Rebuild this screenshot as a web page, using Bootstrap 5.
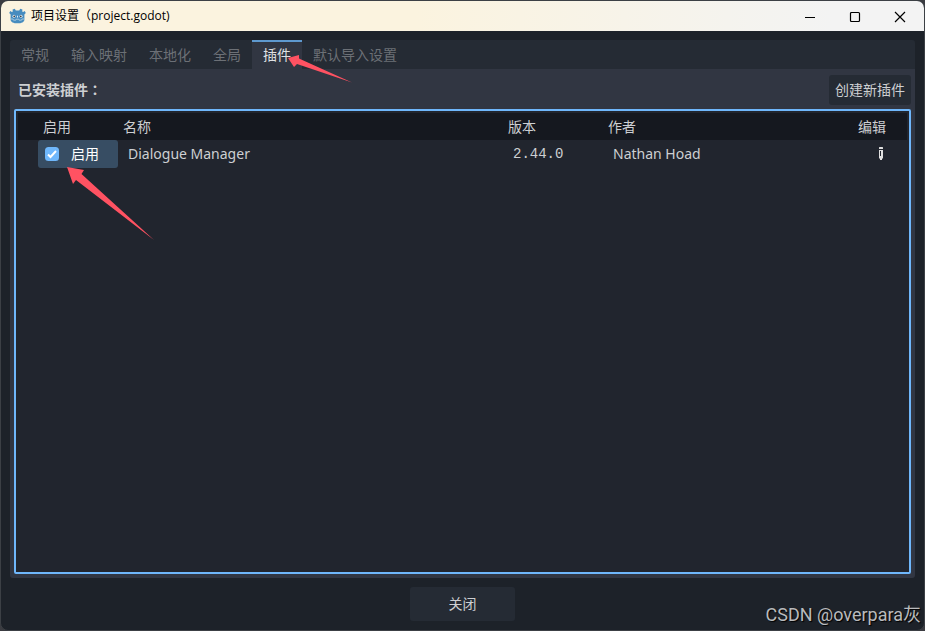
<!DOCTYPE html>
<html lang="zh-CN">
<head>
<meta charset="utf-8">
<meta name="viewport" content="width=device-width, initial-scale=1">
<title>项目设置（project.godot)</title>
<link href="https://cdn.jsdelivr.net/npm/bootstrap@5.3.0/dist/css/bootstrap.min.css" rel="stylesheet">
<style>
  body { background: #3b3c41; color: #cdcfd2; font-family: "Noto Sans", "Noto Sans CJK SC", sans-serif; font-size: 14px; line-height: 20px; }
  .window { background: #1d2229; border: 1px solid #3c4045; border-radius: 8px; }
  .titlebar { height: 30px; padding: 0 2px 0 8px; background: linear-gradient(90deg, #fbf3df 0%, #fbf3df 45%, #f3f3f3 90%); color: #000; font-family: "Open Sans", "Noto Sans CJK SC", sans-serif; font-size: 12px; }
  .app-logo { margin-right: 5px; }
  .win-btn { width: 45px; height: 30px; border: 0; padding: 0; background: none; color: #000; }
  .win-body { padding: 9px; }
  .tab-strip { background: #252b34; border-radius: 3px 3px 0 0; }
  .tab-strip .nav-link { color: #6c7076; padding: 3px 11px 4px; border-top: 2px solid transparent; border-radius: 0; line-height: 20px; }
  .tab-strip .nav-link.active { color: #dfe0e2; background: #313642; border-top-color: #5e99cf; }
  .panel { background: #313642; padding: 6px 4px 4px; border-radius: 0 0 3px 3px; }
  .installed { padding-left: 4px; font-size: 14px; font-weight: 700; }
  .colon { font-family: "Noto Sans CJK TC", sans-serif; }
  .btn-editor { --bs-btn-color: #cdcfd2; --bs-btn-bg: #252b34; --bs-btn-hover-color: #fff; --bs-btn-hover-bg: #2d3440; --bs-btn-border-width: 0; --bs-btn-border-radius: 3px; --bs-btn-font-size: 14px; --bs-btn-line-height: 20px; --bs-btn-padding-x: 6px; --bs-btn-padding-y: 5px; }
  .btn-close-dialog { min-width: 105px; --bs-btn-padding-y: 7px; }
  .dialog-actions { padding-top: 9px; }
  .tree { background: #21252e; border: 2px solid #6fb7fb; border-radius: 2px; padding: 2px; margin-top: 4px; }
  .tree table { table-layout: fixed; line-height: 20px; }
  .tree th { background: #15181f; font-weight: 400; padding: 4px 4px 3px 5px; }
  .tree td { padding: 4px 10px; }
  .tree .cell-on { background: #374d63; color: #fff; padding: 0 7px; border-radius: 3px; }
  .col-gutter { width: 20px; } .col-on { width: 80px; } .col-ver { width: 100px; }
  .col-author { width: 250px; } .col-edit { width: 40px; } .col-end { width: 14px; }
  .version { font-family: "Liberation Mono", monospace; }
  .tick { width: 14px; height: 14px; margin: 0 12px 0 0; border: 0; border-radius: 2px; }
  .tick:checked { background-color: #6fb7fb; background-image: none; }
  .tick-mark { left: 0; top: 3px; pointer-events: none; }
  .edit-btn { border: 0; padding: 0; background: none; width: 16px; height: 16px; }
  .pointer { pointer-events: none; fill: #ff5262; }
  .pointer-tab { left: 287px; top: 54px; }
  .pointer-row { left: 66px; top: 166px; }
  .watermark { right: 3px; bottom: 3px; font-family: "Roboto", "Noto Sans CJK SC", sans-serif; font-size: 18px; line-height: 24px; color: #b9bbbd; text-shadow: 1px 1px 1px #000; }
</style>
</head>
<body>
<div class="window vh-100 d-flex flex-column overflow-hidden position-relative">
  <header class="titlebar d-flex align-items-center flex-shrink-0">
    <svg class="app-logo" width="17" height="16" viewBox="0 0 17 16" aria-hidden="true">
      <path d="M5.800.8 6.800 2.600h3.400L11.200.8l2.200.8-.2 1.800.9.600 1.600-.9 1.100 1.900-1.400 1.400v5c0 2.500-2.800 3.900-6.900 3.900S1.600 13.900 1.600 11.400v-5L.2 5l1.100-1.900 1.600.9.900-.6-.2-1.800z" fill="#478cbf"/>
      <path d="M2 11h2l.5 1.200h2.300l.4-1h2.600l.4 1h2.300l.5-1.200h2" fill="none" stroke="#b7d3e6" stroke-width=".8"/>
      <circle cx="5" cy="8.200" r="1.500" fill="#e8f1f7"/><circle cx="12" cy="8.200" r="1.500" fill="#e8f1f7"/>
      <circle cx="5.200" cy="8.300" r=".9" fill="#414042"/><circle cx="11.800" cy="8.300" r=".9" fill="#414042"/>
      <path d="M8.500 7.700v1.800" stroke="#e8f1f7"/>
    </svg>
    <span class="flex-grow-1">项目设置（project.godot)</span>
    <button class="win-btn" type="button" aria-label="最小化"><svg width="12" height="12" viewBox="0 0 12 12"><path d="M1 6.500h10" stroke="currentColor"/></svg></button>
    <button class="win-btn" type="button" aria-label="最大化"><svg width="12" height="12" viewBox="0 0 12 12"><rect x="1.500" y="1.500" width="9" height="9" rx="1" fill="none" stroke="currentColor" stroke-width="1.200"/></svg></button>
    <button class="win-btn" type="button" aria-label="关闭窗口"><svg width="12" height="12" viewBox="0 0 12 12"><path d="m1 1 10 10M11 1 1 11" stroke="currentColor" stroke-width="1.200"/></svg></button>
  </header>

  <main class="win-body flex-grow-1 d-flex flex-column">
    <nav class="tab-strip nav" aria-label="设置分类">
      <a class="nav-link" href="#general">常规</a>
      <a class="nav-link" href="#input">输入映射</a>
      <a class="nav-link" href="#locale">本地化</a>
      <a class="nav-link" href="#globals">全局</a>
      <a class="nav-link active" aria-current="page" href="#plugins">插件</a>
      <a class="nav-link" href="#import">默认导入设置</a>
    </nav>
    <section class="panel flex-grow-1 d-flex flex-column" id="plugins">
      <div class="d-flex align-items-center justify-content-between">
        <h1 class="installed m-0">已安装插件<span class="colon" lang="zh-TW">：</span></h1>
        <button class="btn btn-editor" type="button">创建新插件</button>
      </div>
      <div class="tree flex-grow-1">
        <table class="w-100">
          <colgroup><col class="col-gutter"><col class="col-on"><col><col class="col-ver"><col class="col-author"><col class="col-edit"><col class="col-end"></colgroup>
          <thead>
            <tr><th></th><th scope="col">启用</th><th scope="col">名称</th><th scope="col">版本</th><th scope="col">作者</th><th scope="col">编辑</th><th></th></tr>
          </thead>
          <tbody>
            <tr>
              <td></td>
              <td class="cell-on"><div class="d-flex align-items-center position-relative"><input class="form-check-input tick" type="checkbox" id="dm-on" checked><svg class="tick-mark position-absolute" width="14" height="14" viewBox="0 0 14 14" aria-hidden="true"><path d="m3 7.500 2.500 2.500L11 4" fill="none" stroke="#fff" stroke-width="2"/></svg><label for="dm-on">启用</label></div></td>
              <td>Dialogue Manager</td>
              <td class="version">2.44.0</td>
              <td>Nathan Hoad</td>
              <td class="p-0"><button class="edit-btn d-flex ms-auto me-1" type="button" aria-label="编辑插件"><svg width="16" height="16" viewBox="0 0 16 16"><path d="M6 3V1.500L6.500 1h3l.5.500V3zM6 4h4v8l-1 1v1H7v-1l-1-1zM7 5v5h1V5z" fill="#e0e0e0" fill-rule="evenodd"/></svg></button></td>
              <td></td>
            </tr>
          </tbody>
        </table>
      </div>
    </section>
    <footer class="dialog-actions text-center">
      <button class="btn btn-editor btn-close-dialog" type="button">关闭</button>
    </footer>
  </main>

  <svg class="pointer pointer-tab position-absolute" width="66" height="30" viewBox="0 0 66 30" aria-hidden="true"><path d="M0 3 11 0 11 3.500 64 27.500 9 9 6 12z"/></svg>
  <svg class="pointer pointer-row position-absolute" width="90" height="76" viewBox="0 0 90 76" aria-hidden="true"><path d="M0 0 17 3 14.500 7 87 73 9 13 6 17z"/></svg>
  <div class="watermark position-absolute">CSDN @overpara灰</div>
</div>
<script src="https://cdn.jsdelivr.net/npm/bootstrap@5.3.0/dist/js/bootstrap.bundle.min.js"></script>
</body>
</html>
